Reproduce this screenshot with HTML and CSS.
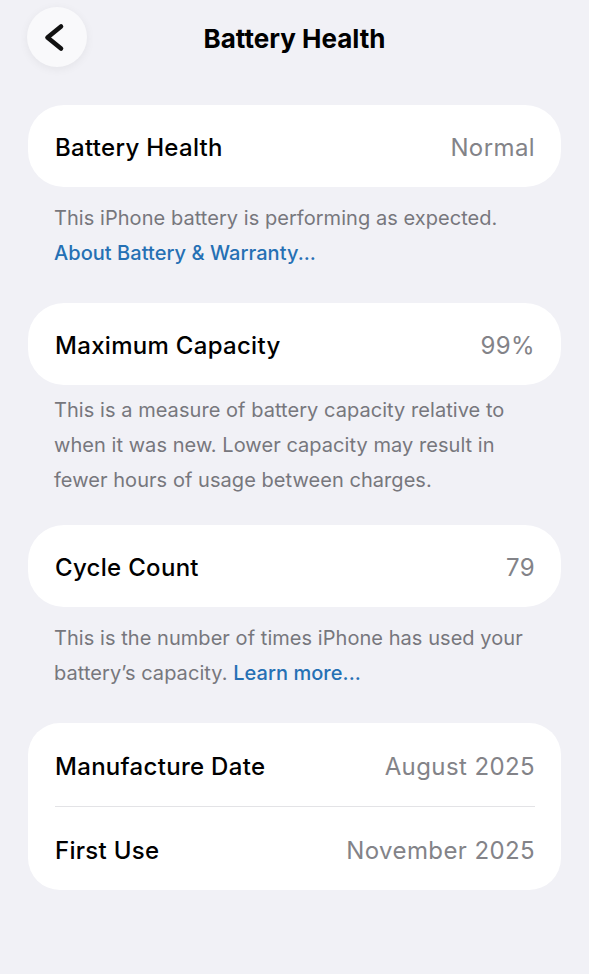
FILE: index.html
```html
<!DOCTYPE html>
<html lang="en">
<head>
    <meta charset="UTF-8">
    <meta name="viewport" content="width=device-width, initial-scale=1.0">
    <title>Battery Health</title>
    <link rel="stylesheet" href="styles.css">
</head>
<body>
    <div class="nav-bar">
        <button class="back-btn" aria-label="Back">
            <svg width="60" height="60" viewBox="0 0 60 60">
                <path d="M34 19.5 L20.5 30.5 L34 41.5" fill="none" stroke="#111" stroke-width="4.6" stroke-linecap="round" stroke-linejoin="round"/>
            </svg>
        </button>
        <div class="nav-title">Battery Health</div>
        <div></div>
    </div>

    <div class="content">
        <div class="card">
            <div class="row">
                <span class="label">Battery Health</span>
                <span class="value">Normal</span>
            </div>
        </div>
        <div class="footer">
            This iPhone battery is performing as expected.<br>
            <a class="link" href="#">About Battery &amp; Warranty...</a>
        </div>

        <div class="card">
            <div class="row">
                <span class="label">Maximum Capacity</span>
                <span class="value">99%</span>
            </div>
        </div>
        <div class="footer footer-tight">
            This is a measure of battery capacity relative to when it was new. Lower capacity may result in fewer hours of usage between charges.
        </div>

        <div class="card">
            <div class="row">
                <span class="label">Cycle Count</span>
                <span class="value">79</span>
            </div>
        </div>
        <div class="footer">
            This is the number of times iPhone has used your battery’s capacity. <a class="link" href="#">Learn more...</a>
        </div>

        <div class="card card-group">
            <div class="row row-tall">
                <span class="label">Manufacture Date</span>
                <span class="value">August 2025</span>
            </div>
            <div class="divider"></div>
            <div class="row row-tall">
                <span class="label">First Use</span>
                <span class="value">November 2025</span>
            </div>
        </div>
    </div>
</body>
</html>
```

FILE: styles.css
```css
body {
    margin: 0;
    background-color: #f1f1f6;
    font-family: Inter, "Noto Sans", sans-serif;
    color: #000;
    height: 974px;
    overflow: hidden;
}
.nav-bar {
    display: grid;
    grid-template-columns: 1fr auto 1fr;
    align-items: center;
    padding: 7px 27px 0 27px;
}
.back-btn {
    width: 60px;
    height: 60px;
    border: none;
    border-radius: 50%;
    background-color: #f9f9fb;
    box-shadow: 0 2px 10px rgba(0, 0, 0, 0.06);
    padding: 0;
    display: block;
    cursor: pointer;
}
.back-btn svg {
    display: block;
}
.nav-title {
    font-size: 26px;
    font-weight: 700;
    letter-spacing: 0;
    margin-top: 3px;
}
.content {
    padding: 38px 28px 0 28px;
}
.card {
    background-color: #fff;
    border-radius: 36px;
}
.card-group {
    border-radius: 32px;
}
.row {
    box-sizing: border-box;
    height: 82px;
    display: flex;
    align-items: center;
    justify-content: space-between;
    padding: 3px 26px 0 27px;
}
.row-tall {
    height: 83px;
}
.label {
    font-size: 24px;
    font-weight: 500;
    letter-spacing: 0.3px;
}
.value {
    font-size: 24px;
    color: #838388;
    letter-spacing: 0.4px;
}
.divider {
    height: 1px;
    background-color: #e3e3e6;
    margin: 0 26px 0 27px;
}
.footer {
    padding: 14px 30px 0 26px;
    margin-bottom: 32px;
    font-size: 20px;
    line-height: 35px;
    color: #77777d;
    letter-spacing: 0.05px;
}
.footer-tight {
    padding-top: 8px;
    margin-bottom: 27px;
}
.link {
    color: #2570b4;
    text-decoration: none;
    font-weight: 500;
}
```
